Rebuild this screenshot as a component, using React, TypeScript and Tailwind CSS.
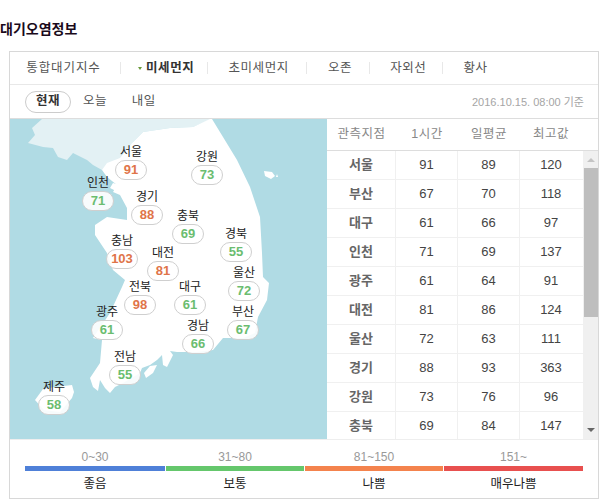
const fontStack = "[font-family:'Liberation_Sans','Noto_Sans_CJK_KR',sans-serif]";

const pins = [
  { name: "서울", value: 91, pos: "left-[121px] top-[27px]", bad: true },
  { name: "강원", value: 73, pos: "left-[197px] top-[32px]", bad: false },
  { name: "인천", value: 71, pos: "left-[88px] top-[58px]", bad: false },
  { name: "경기", value: 88, pos: "left-[137px] top-[72px]", bad: true },
  { name: "충북", value: 69, pos: "left-[178px] top-[91px]", bad: false },
  { name: "경북", value: 55, pos: "left-[226px] top-[109px]", bad: false },
  { name: "충남", value: 103, pos: "left-[112px] top-[116px]", bad: true },
  { name: "대전", value: 81, pos: "left-[153px] top-[128px]", bad: true },
  { name: "울산", value: 72, pos: "left-[234px] top-[148px]", bad: false },
  { name: "전북", value: 98, pos: "left-[130px] top-[162px]", bad: true },
  { name: "대구", value: 61, pos: "left-[180px] top-[162px]", bad: false },
  { name: "광주", value: 61, pos: "left-[97px] top-[187px]", bad: false },
  { name: "부산", value: 67, pos: "left-[233px] top-[187px]", bad: false },
  { name: "경남", value: 66, pos: "left-[188px] top-[201px]", bad: false },
  { name: "전남", value: 55, pos: "left-[115px] top-[232px]", bad: false },
  { name: "제주", value: 58, pos: "left-[44px] top-[262px]", bad: false },
];

const rows = [
  ["서울", 91, 89, 120],
  ["부산", 67, 70, 118],
  ["대구", 61, 66, 97],
  ["인천", 71, 69, 137],
  ["광주", 61, 64, 91],
  ["대전", 81, 86, 124],
  ["울산", 72, 63, 111],
  ["경기", 88, 93, 363],
  ["강원", 73, 76, 96],
  ["충북", 69, 84, 147],
];

const legend = [
  { range: "0~30", label: "좋음", w: "w-[140px]", color: "bg-[#4f80d8]" },
  { range: "31~80", label: "보통", w: "w-[138px]", color: "bg-[#65c76c]" },
  { range: "81~150", label: "나쁨", w: "w-[138px]", color: "bg-[#f4834d]" },
  { range: "151~", label: "매우나쁨", w: "w-[139px]", color: "bg-[#e8504f]" },
];

function KoreaMap() {
  return (
    <svg viewBox="10 119 317 320" className="absolute inset-0 w-full h-full">
      {/* north */}
      <polygon
        fill="#e3f1f4"
        points="42,119 32,128 35,135 28,143 43,147 53,148 58,157 67,160 73,153 87,160 93,165 102,170 120,170 133,142 143,132 170,128 193,127 212,119"
      />
      {/* south */}
      <polygon
        fill="#ffffff"
        points="102,170 107,163 120,158 133,142 143,132 170,128 193,127 210,119 212,119 223,137 237,160 250,187 260,217 262,253 263,277 269,283 267,300 258,317 255,333 243,338 223,338 213,350 197,352 177,352 170,351 173,355 167,367 163,365 162,355 157,360 150,365 142,368 140,373 123,383 115,387 110,393 105,388 100,380 98,391 93,387 90,378 100,363 102,340 93,338 110,313 122,287 125,280 113,270 107,253 95,235 95,225 107,217 127,220 127,208 120,195 113,192 117,185 107,177"
      />
      <polygon fill="#ffffff" points="157,365 153,373 146,378 144,373 150,366" />
      <polygon fill="#ffffff" points="264,171 272,172 275,176 271,179 265,176" />
      <polygon fill="#ffffff" points="277,174 278,177 276,177" />
      <polygon fill="#ffffff" points="113,183 120,185 116,191 110,188" />
      {/* jeju */}
      <polygon fill="#ffffff" points="35,400 43,389 55,387 72,385 74,392 72,398 60,412 44,410" />
    </svg>
  );
}

function Pin({ name, value, pos, bad }: { name: string; value: number; pos: string; bad: boolean }) {
  return (
    <div className={`absolute ${pos} -translate-x-1/2 flex flex-col items-center`}>
      <span className="text-[12px] leading-[12px] text-[#222]">{name}</span>
      <span
        className={`mt-[2px] w-[32px] h-[20px] rounded-full border border-[#cfcfcf] bg-white/90 flex items-center justify-center text-[13px] font-bold ${
          bad ? "text-[#df7449]" : "text-[#6bbd70]"
        }`}
      >
        {value}
      </span>
    </div>
  );
}

function Scrollbar() {
  return (
    <div className="w-[15px] h-full bg-[#f0f0f0] flex flex-col items-center">
      <div className="h-[17px] flex items-center justify-center">
        <div className="w-0 h-0 border-x-[4px] border-x-transparent border-b-[4px] border-b-[#c4c4c4]" />
      </div>
      <div className="w-[14px] h-[149px] bg-[#bebebe]" />
      <div className="flex-1" />
      <div className="h-[17px] flex items-center justify-center mb-[1px]">
        <div className="w-0 h-0 border-x-[4px] border-x-transparent border-t-[4px] border-t-[#666]" />
      </div>
    </div>
  );
}

function Table() {
  return (
    <div className="w-[271px] flex flex-col">
      <div className="h-[32px] flex items-center border-b border-[#dddddd] text-[12.5px] text-[#888] tracking-[0.5px]">
        <span className="w-[69px] text-center">관측지점</span>
        <span className="w-[62px] text-center">1시간</span>
        <span className="w-[62px] text-center">일평균</span>
        <span className="w-[62px] text-center">최고값</span>
      </div>
      <div className="flex h-[288px] overflow-hidden">
        <div className="w-[256px] h-[288px] overflow-hidden shrink-0">
          {rows.map((r) => (
            <div key={r[0]} className="h-[29px] flex border-b border-[#f0f0f0] text-[13px] text-[#444]">
              <span className="w-[69px] flex items-center justify-center font-bold text-[#666] border-r border-[#f0f0f0]">
                {r[0]}
              </span>
              <span className="w-[62px] flex items-center justify-center border-r border-[#f0f0f0]">{r[1]}</span>
              <span className="w-[62px] flex items-center justify-center border-r border-[#f0f0f0]">{r[2]}</span>
              <span className="w-[62px] flex items-center justify-center">{r[3]}</span>
            </div>
          ))}
        </div>
        <Scrollbar />
      </div>
    </div>
  );
}

export default function App() {
  return (
    <div className={`w-[603px] h-[503px] bg-white overflow-hidden ${fontStack}`}>
      <h2 className="h-[51px] pt-[20px] text-[14px] leading-[18px] font-bold text-[#1a0a1a]">대기오염정보</h2>
      <div className="ml-[9px] w-[590px] border border-[#d8d8d8]">
        {/* tabs */}
        <div className="h-[33px] flex items-center border-b border-[#e8e8e8] pl-[16px] text-[12.5px] text-[#555] tracking-[0.6px]">
          <span className="w-[75px] text-center whitespace-nowrap tracking-[0.9px]">통합대기지수</span>
          <span className="w-px h-[12px] bg-[#e8e8e8] ml-[19px]" />
          <span className="ml-[17px] w-0 h-0 border-x-[2.5px] border-x-transparent border-t-[3px] border-t-[#6b9a3a]" />
          <span className="ml-[4px] font-bold text-[#333]">미세먼지</span>
          <span className="w-px h-[12px] bg-[#e8e8e8] ml-[13px]" />
          <span className="ml-[20px]">초미세먼지</span>
          <span className="w-px h-[12px] bg-[#e8e8e8] ml-[17px]" />
          <span className="ml-[21px]">오존</span>
          <span className="w-px h-[12px] bg-[#e8e8e8] ml-[17px]" />
          <span className="ml-[20px]">자외선</span>
          <span className="w-px h-[12px] bg-[#e8e8e8] ml-[16px]" />
          <span className="ml-[20px]">황사</span>
        </div>
        {/* time row */}
        <div className="h-[34px] flex items-center border-b border-[#dddddd] pl-[15px] pr-[14px] text-[12.5px] text-[#555] tracking-[0.4px]">
          <span className="w-[46px] h-[22px] rounded-full border border-[#cccccc] flex items-center justify-center font-bold text-[#333]">
            현재
          </span>
          <span className="ml-[12px]">오늘</span>
          <span className="ml-[25px]">내일</span>
          <span className="ml-auto mt-[2px] text-[11px] text-[#a5a5a5] tracking-normal">2016.10.15. 08:00 기준</span>
        </div>
        {/* map and table */}
        <div className="flex h-[320px]">
          <div className="relative w-[317px] h-[320px] bg-[#b0dbe4] shrink-0">
            <KoreaMap />
            {pins.map((p) => (
              <Pin key={p.name} {...p} />
            ))}
          </div>
          <Table />
        </div>
        {/* legend */}
        <div className="h-[59px] border-t border-[#eeeeee] pl-[15px] pt-[8px] flex gap-px">
          {legend.map((l) => (
            <div key={l.label} className={`${l.w} flex flex-col items-center`}>
              <span className="h-[18px] leading-[18px] text-[12px] text-[#999]">{l.range}</span>
              <div className={`w-full h-[5px] ${l.color}`} />
              <span className="mt-[4px] text-[12.5px] leading-[18px] text-[#222]">{l.label}</span>
            </div>
          ))}
        </div>
      </div>
    </div>
  );
}
